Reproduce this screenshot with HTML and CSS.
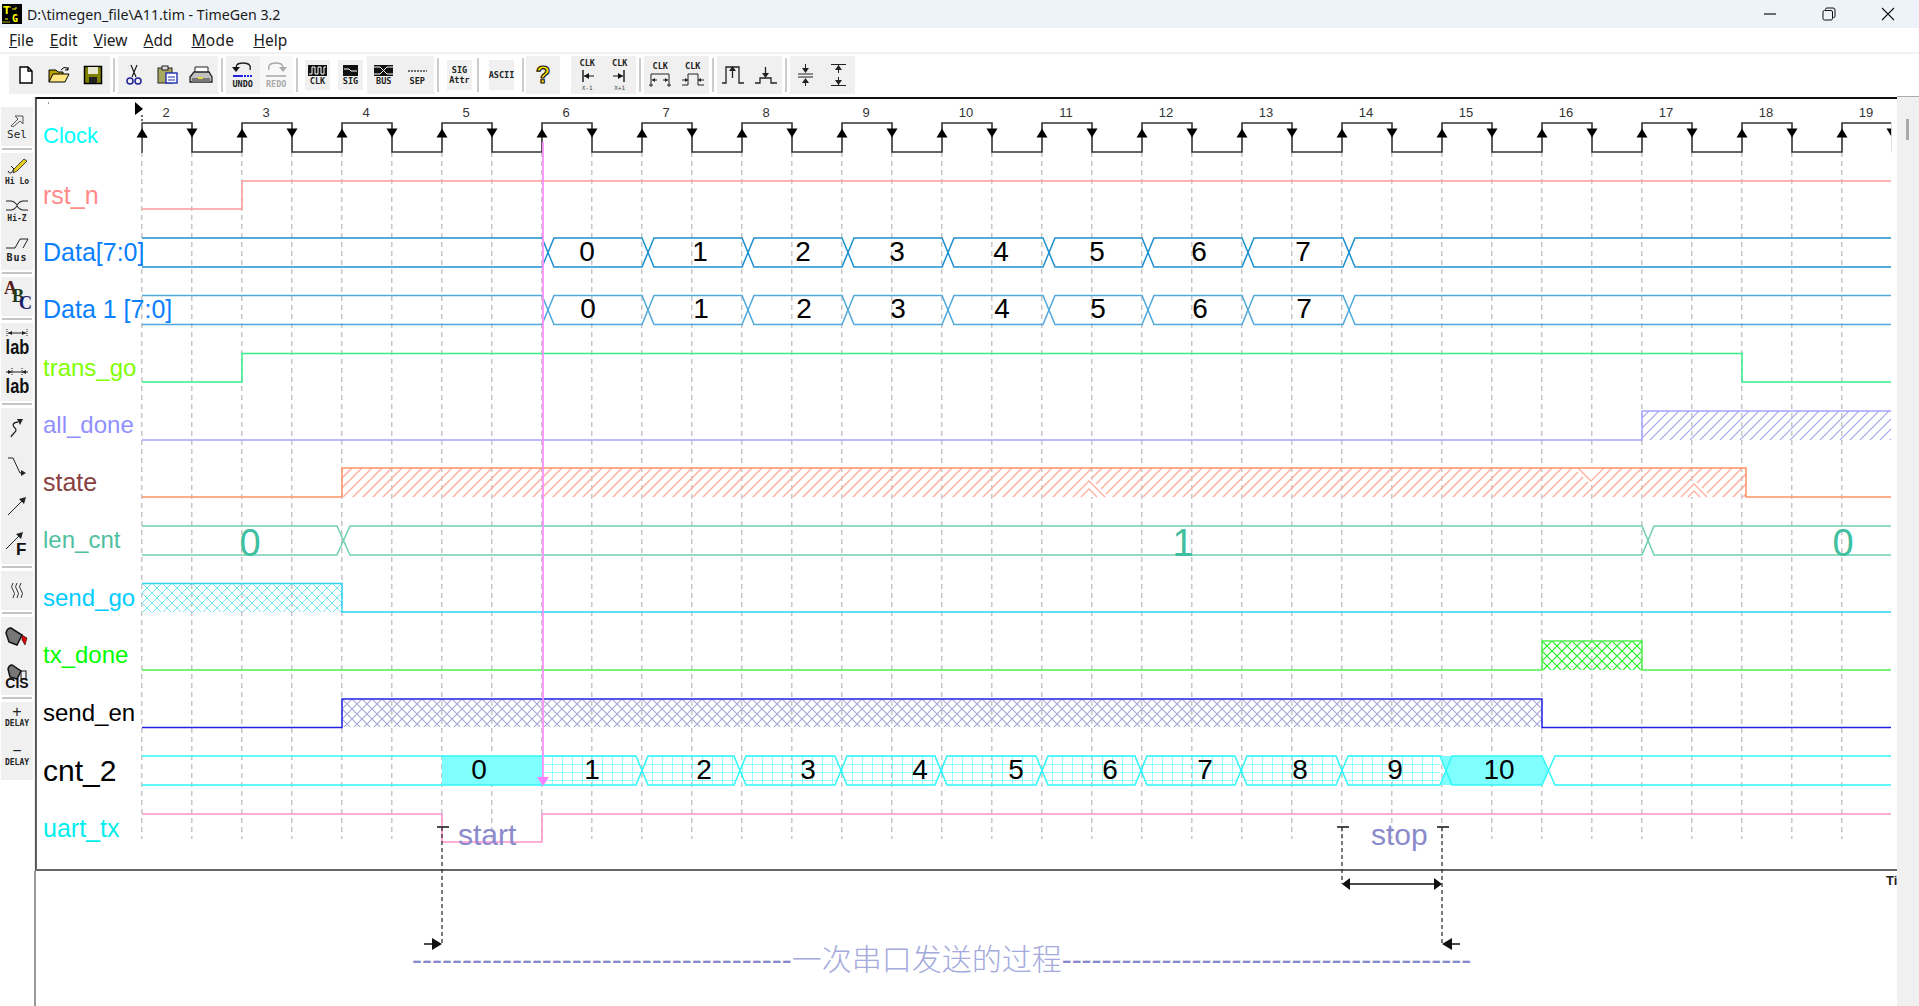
FILE: index.html
```html
<!DOCTYPE html>
<html lang="en">
<head>
  <meta charset="UTF-8" />
  <title>D:\timegen_file\A11.tim - TimeGen 3.2</title>
  <link rel="stylesheet" href="styles.css">
</head>
<body>
  <div class="titlebar">
    <svg class="app-icon" width="20" height="20" viewBox="0 0 20 20">
      <rect width="20" height="20" fill="#000"/>
      <path d="M1 3H9M5 3V10M10 5H14V3M3 15H6" stroke="#ff0" stroke-width="1" fill="none"/>
      <text x="1.5" y="10" class="app-t">T</text>
      <text x="10" y="17.5" class="app-t">G</text>
      <path d="M0 18H8" stroke="#aa0" fill="none"/>
    </svg>
    <span class="title-text">D:\timegen_file\A11.tim - TimeGen 3.2</span>
    <div class="win-btns">
      <button class="win-btn"><svg width="14" height="14" viewBox="0 0 14 14"><path d="M1 7H13" stroke="#111" stroke-width="1.2"/></svg></button>
      <button class="win-btn"><svg width="14" height="14" viewBox="0 0 14 14"><path d="M3.5 3V2.5Q3.5 1 5 1H11Q13 1 13 3V9Q13 10.5 11.5 10.5H11" fill="none" stroke="#111"/><rect x="1" y="3.5" width="9.5" height="9.5" rx="1.5" fill="none" stroke="#111"/></svg></button>
      <button class="win-btn"><svg width="14" height="14" viewBox="0 0 14 14"><path d="M1 1L13 13M13 1L1 13" stroke="#111" stroke-width="1.1"/></svg></button>
    </div>
  </div>

  <div class="menubar">
    <span><u>F</u>ile</span>
    <span><u>E</u>dit</span>
    <span><u>V</u>iew</span>
    <span><u>A</u>dd</span>
    <span class="menu-mode"><u>M</u>ode</span>
    <span><u>H</u>elp</span>
  </div>

  <div class="toolbar">
    <div class="tb-group">
      <button class="tb-btn"><svg width="18" height="20" viewBox="0 0 18 20"><path d="M3 2H11L15 6V18H3Z M11 2V6H15" fill="#fff" stroke="#000" stroke-width="1.4"/></svg></button>
      <button class="tb-btn"><svg width="22" height="20" viewBox="0 0 22 20"><path d="M1 17V5H8L10 7H15V9" fill="#b8a000" stroke="#000"/><path d="M1 17L5 9H21L17 17Z" fill="#ffe680" stroke="#000"/><path d="M13 5Q16 1 19 3L20 5M20 2V5H17" fill="none" stroke="#000"/></svg></button>
      <button class="tb-btn"><svg width="20" height="20" viewBox="0 0 20 20"><rect x="1.5" y="1.5" width="17" height="17" fill="#808000" stroke="#000" stroke-width="1.5"/><rect x="5" y="2" width="10" height="7" fill="#e8e8d0"/><rect x="6" y="12" width="8" height="6" fill="#222"/></svg></button>
    </div>
    <i class="tb-sep"></i>
    <div class="tb-group">
      <button class="tb-btn"><svg width="18" height="22" viewBox="0 0 18 22"><path d="M6 1L11 13M12 1L7 13" stroke="#111" stroke-width="1.1"/><circle cx="5" cy="17" r="3" fill="none" stroke="#22229a" stroke-width="1.5"/><circle cx="13" cy="17" r="3" fill="none" stroke="#22229a" stroke-width="1.5"/></svg></button>
      <button class="tb-btn"><svg width="22" height="20" viewBox="0 0 22 20"><rect x="1" y="3" width="14" height="15" fill="#a8a860" stroke="#222"/><rect x="5" y="1" width="6" height="4" fill="#ddd" stroke="#222"/><rect x="9" y="8" width="11" height="10" fill="#fff" stroke="#2030b0" stroke-width="1.4"/><path d="M11 12H18M11 15H18" stroke="#2030b0"/></svg></button>
      <button class="tb-btn"><svg width="24" height="20" viewBox="0 0 24 20"><path d="M6 8V2H19V8" fill="#fff" stroke="#222"/><path d="M1 12L5 7H20L23 12V17H1Z" fill="#c0c0c0" stroke="#222" stroke-width="1.3"/><rect x="3" y="13" width="18" height="4" fill="#777"/><rect x="9" y="12" width="5" height="2" fill="#e8d840"/></svg></button>
    </div>
    <i class="tb-sep"></i>
    <div class="tb-group tb-undo">
      <button class="tb-btn tb-stack">
        <svg width="24" height="17" viewBox="0 0 24 17"><path d="M6 8Q3 1 12 1Q21 1 19 8" fill="none" stroke="#222" stroke-width="1.3"/><path d="M1 5L9 5L5 10Z" fill="#111"/><path d="M2 14H12" stroke="#2222dd" stroke-width="2"/><path d="M13 14H22" stroke="#2222dd" stroke-width="2" stroke-dasharray="2 1"/></svg>
        <span class="tb-cap">UNDO</span>
      </button>
      <button class="tb-btn tb-stack tb-off">
        <svg width="24" height="17" viewBox="0 0 24 17"><path d="M5 8Q3 1 12 1Q21 1 18 8" fill="none" stroke="#aaa" stroke-width="1.3"/><path d="M23 5L15 5L19 10Z" fill="#aaa"/><path d="M2 14H22" stroke="#bbb" stroke-width="2"/></svg>
        <span class="tb-cap">REDO</span>
      </button>
    </div>
    <i class="tb-sep"></i>
    <button class="tb-btn tb-stack tb-mini">
      <svg width="19" height="11" viewBox="0 0 19 11"><rect width="19" height="11" fill="#111"/><path d="M1 9H4V2H7V9H10V2H13V9H16V2H18" fill="none" stroke="#fff"/></svg>
      <span class="tb-cap">CLK</span>
    </button>
    <button class="tb-btn tb-stack tb-mini">
      <svg width="15" height="11" viewBox="0 0 15 11"><rect width="15" height="11" fill="#111"/><path d="M1 4H6L8 6H14" fill="none" stroke="#fff"/></svg>
      <span class="tb-cap">SIG</span>
    </button>
    <div class="tb-group">
      <button class="tb-btn tb-stack">
        <svg width="19" height="11" viewBox="0 0 19 11"><rect width="19" height="11" fill="#111"/><path d="M0 2H6L13 9H19M0 9H6L13 2H19" fill="none" stroke="#fff"/></svg>
        <span class="tb-cap">BUS</span>
      </button>
      <button class="tb-btn tb-stack">
        <svg width="19" height="11" viewBox="0 0 19 11"><path d="M0 6H19" stroke="#444" stroke-dasharray="2 1" stroke-width="1.5"/></svg>
        <span class="tb-cap">SEP</span>
      </button>
    </div>
    <i class="tb-sep"></i>
    <button class="tb-btn tb-stack tb-mini tb-words"><span class="tb-cap">SIG</span><span class="tb-cap">Attr</span></button>
    <i class="tb-sep"></i>
    <button class="tb-btn tb-stack tb-mini tb-ascii"><span class="tb-cap">ASCII</span></button>
    <i class="tb-sep tb-sep-help"></i>
    <div class="tb-group">
      <button class="tb-btn"><svg width="20" height="30" viewBox="0 0 20 30"><text x="10" y="23" class="help-mark">?</text></svg></button>
    </div>
    <div class="tb-group tb-gap">
      <button class="tb-btn tb-narrow tb-stack">
        <span class="tb-cap">CLK</span>
        <svg width="18" height="14" viewBox="0 0 18 14"><path d="M5 1V13" stroke="#111" stroke-width="1.4"/><path d="M6 7H16" stroke="#111"/><path d="M6 7L11 4V10Z" fill="#111"/></svg>
        <span class="tb-tiny">X-1</span>
      </button>
      <button class="tb-btn tb-narrow tb-stack">
        <span class="tb-cap">CLK</span>
        <svg width="18" height="14" viewBox="0 0 18 14"><path d="M13 1V13" stroke="#111" stroke-width="1.4"/><path d="M2 7H12" stroke="#111"/><path d="M12 7L7 4V10Z" fill="#111"/></svg>
        <span class="tb-tiny">X+1</span>
      </button>
    </div>
    <i class="tb-sep"></i>
    <div class="tb-group">
      <button class="tb-btn tb-narrow tb-stack">
        <span class="tb-cap">CLK</span>
        <svg width="24" height="16" viewBox="0 0 24 16"><path d="M3 15V2H21V15" fill="none" stroke="#222"/><path d="M1 13H5M19 13H23" stroke="#222"/><path d="M4 8H9M20 8H15" stroke="#222"/><path d="M4 8L7 6V10ZM20 8L17 6V10Z" fill="#222"/></svg>
      </button>
      <button class="tb-btn tb-narrow tb-stack">
        <span class="tb-cap">CLK</span>
        <svg width="24" height="16" viewBox="0 0 24 16"><path d="M1 13H7V2H17V13H23" fill="none" stroke="#222"/><path d="M1 8H7M23 8H17" stroke="#222"/><path d="M7 8L4 6V10ZM17 8L20 6V10Z" fill="#222"/></svg>
      </button>
    </div>
    <i class="tb-sep"></i>
    <div class="tb-group">
      <button class="tb-btn tb-narrow"><svg width="24" height="22" viewBox="0 0 24 22"><path d="M1 19H5V3H18V19H23" fill="none" stroke="#222" stroke-width="1.3"/><path d="M11.5 5V14" stroke="#222" stroke-width="1.3"/><path d="M11.5 2L8 7H15Z" fill="#222"/></svg></button>
      <button class="tb-btn tb-narrow"><svg width="24" height="22" viewBox="0 0 24 22"><path d="M1 19H6V14H17V19H23" fill="none" stroke="#222" stroke-width="1.3"/><path d="M11.5 3V12" stroke="#222" stroke-width="1.3"/><path d="M11.5 14L8 9H15Z" fill="#222"/></svg></button>
    </div>
    <i class="tb-sep"></i>
    <div class="tb-group">
      <button class="tb-btn tb-narrow"><svg width="20" height="24" viewBox="0 0 20 24"><path d="M2 11H17M2 14H17" stroke="#222" stroke-width="1.1"/><path d="M9.5 1V9M9.5 16V23" stroke="#222"/><path d="M9.5 10L6 5H13ZM9.5 15L6 20H13Z" fill="#222"/></svg></button>
      <button class="tb-btn tb-narrow"><svg width="20" height="24" viewBox="0 0 20 24"><path d="M2 1.5H17M2 22.5H17" stroke="#222" stroke-width="1.2"/><path d="M9.5 2V10M9.5 14V22" stroke="#222"/><path d="M9.5 2L6 7H13ZM9.5 22L6 17H13Z" fill="#222"/></svg></button>
    </div>
  </div>

  <div class="workspace">
    <div class="sidebar">
      <div class="side-group">
        <button class="side-btn">
          <svg width="16" height="14" viewBox="0 0 16 14"><path d="M2 13L9 6L6 3H14V11L11 8L4 14Z" fill="#eee" stroke="#555"/></svg>
          <span class="side-cap">Sel</span>
        </button>
      </div>
      <i class="side-sep"></i>
      <div class="side-group">
        <button class="side-btn">
          <svg width="21" height="17" viewBox="0 0 21 17"><path d="M1 13Q3 18 7 11L4 8" fill="none" stroke="#111"/><path d="M7 11L17 1L20 3L10 13L6 15Z" fill="#e8d020" stroke="#222" stroke-width=".8"/></svg>
          <span class="side-cap side-bold">Hi Lo</span>
        </button>
        <button class="side-btn">
          <svg width="24" height="13" viewBox="0 0 24 13"><path d="M1 2H6Q9 2 12 6Q15 2 18 2H23M1 11H6Q9 11 12 7Q15 11 18 11H23" fill="none" stroke="#222" stroke-width="1.2"/></svg>
          <span class="side-cap side-bold">Hi-Z</span>
        </button>
        <button class="side-btn">
          <svg width="24" height="12" viewBox="0 0 24 12"><path d="M1 10H10L15 1H23L18 10" fill="none" stroke="#222"/></svg>
          <span class="side-cap side-tab">Bus</span>
        </button>
      </div>
      <i class="side-sep"></i>
      <div class="side-group">
        <button class="side-btn">
          <svg width="30" height="36" viewBox="0 0 30 36"><text x="2" y="15" class="abc"><tspan class="abc-a">A</tspan><tspan class="abc-b" dx="-5" dy="8">B</tspan><tspan class="abc-c" dx="-5" dy="7">C</tspan></text></svg>
        </button>
      </div>
      <i class="side-sep"></i>
      <div class="side-group">
        <button class="side-btn">
          <svg width="24" height="8" viewBox="0 0 24 8"><path d="M2 0V8M22 0V8" stroke="#222" stroke-dasharray="1 1"/><path d="M3 4H21" stroke="#222"/><path d="M3 4L7 2V6ZM21 4L17 2V6Z" fill="#222"/></svg>
          <span class="side-lab">lab</span>
        </button>
        <button class="side-btn">
          <svg width="24" height="8" viewBox="0 0 24 8"><path d="M7 0V8M17 0V8" stroke="#222" stroke-dasharray="1 1"/><path d="M1 4H23" stroke="#222"/><path d="M7 4L3 2V6ZM17 4L21 2V6Z" fill="#222"/></svg>
          <span class="side-lab">lab</span>
        </button>
      </div>
      <i class="side-sep"></i>
      <div class="side-group">
        <button class="side-btn"><svg width="22" height="22" viewBox="0 0 22 22"><path d="M12 5Q5 6 8 10Q12 13 8 16Q6 18 5 20" fill="none" stroke="#222" stroke-width="1.3"/><path d="M17 2L11 2L14 8Z" fill="#222"/></svg></button>
        <button class="side-btn"><svg width="22" height="22" viewBox="0 0 22 22"><path d="M2 2H7L14 17H18" fill="none" stroke="#222"/><path d="M20 17L15 14V20Z" fill="#222"/></svg></button>
        <button class="side-btn"><svg width="22" height="22" viewBox="0 0 22 22"><path d="M2 20L19 3" stroke="#222"/><path d="M20 2L13 4L18 9Z" fill="#222"/></svg></button>
        <button class="side-btn"><svg width="26" height="34" viewBox="0 0 26 34"><path d="M2 21L18 5" stroke="#222"/><path d="M19 4L12 6L17 11Z" fill="#222"/><text x="12" y="27" class="side-f">F</text></svg></button>
      </div>
      <i class="side-sep"></i>
      <div class="side-group">
        <button class="side-btn"><svg width="14" height="18" viewBox="0 0 14 18"><path d="M3 1Q0 5 3 8T3 16M7 1Q4 5 7 8T7 16M11 1Q8 5 11 8T11 16" fill="none" stroke="#333"/></svg></button>
      </div>
      <i class="side-sep"></i>
      <div class="side-group">
        <button class="side-btn"><svg width="24" height="20" viewBox="0 0 24 20"><path d="M1 6Q2 1 6 1L17 8L12 18L4 15Z" fill="#777" stroke="#111" stroke-width="1.5"/><path d="M17 8L22 11L20 18L17 13Z" fill="#e00000" stroke="#111" stroke-width=".6"/></svg></button>
        <button class="side-btn side-cis">
          <svg width="22" height="16" viewBox="0 0 22 16"><path d="M2 5Q3 1 6 1L15 7L11 15L4 13Z" fill="#777" stroke="#111" stroke-width="1.5"/><rect x="15" y="7" width="5" height="8" fill="none" stroke="#111"/></svg>
          <span class="side-lab side-lab-s">CIS</span>
        </button>
      </div>
      <i class="side-sep"></i>
      <div class="side-group">
        <button class="side-btn side-top"><span class="delay-sign">+</span><span class="side-cap side-delay">DELAY</span></button>
        <button class="side-btn side-top"><span class="delay-sign">&#8722;</span><span class="side-cap side-delay">DELAY</span></button>
      </div>
    </div>

    <svg class="sheet" width="1863" height="910" viewBox="34 96 1863 910">
      <defs>
        <pattern id="gridline" patternUnits="userSpaceOnUse" x="117" y="152" width="50" height="9">
          <rect x="24" y="0" width="1.5" height="5" fill="#c6c6c6"/>
        </pattern>
        <pattern id="clock-tile" patternUnits="userSpaceOnUse" x="117" y="120" width="100" height="36">
          <path d="M0 32H25V3H75V32H100" fill="none" stroke="#333" stroke-width="1.6"/>
          <path d="M25 8.5L19.5 17.5H30.5Z M69.5 8.5H80.5L75 17.5Z" fill="#000"/>
        </pattern>
        <pattern id="slash-red" patternUnits="userSpaceOnUse" width="10" height="10">
          <path d="M-1 11L11 -1M-1 1L1 -1M9 11L11 9" stroke="#ffb0a0" stroke-width="1.5"/>
        </pattern>
        <pattern id="slash-blue" patternUnits="userSpaceOnUse" width="10" height="10">
          <path d="M-1 11L11 -1M-1 1L1 -1M9 11L11 9" stroke="#a4a4ec" stroke-width="1.2"/>
        </pattern>
        <pattern id="cross-cyan" patternUnits="userSpaceOnUse" x="142" y="583" width="10" height="10">
          <path d="M0 0L10 10M0 10L10 0" stroke="#6fe6f2" stroke-width="1"/>
        </pattern>
        <pattern id="cross-green" patternUnits="userSpaceOnUse" x="1542" y="641" width="10" height="10">
          <path d="M0 0L10 10M0 10L10 0" stroke="#22ee22" stroke-width="1.2"/>
        </pattern>
        <pattern id="cross-navy" patternUnits="userSpaceOnUse" x="342" y="699" width="10" height="10">
          <path d="M0 0L10 10M0 10L10 0" stroke="#a8a8d8" stroke-width="1.2"/>
        </pattern>
        <pattern id="grid-cyan" patternUnits="userSpaceOnUse" x="542" y="756" width="10" height="8">
          <path d="M0 0H10M0 0V8" stroke="#70ffff" stroke-width="1.5"/>
        </pattern>
        <g id="data-bus">
          <path d="M142 238H542L554 267H642L654 238H742L754 267H842L854 238H942L954 267H1043L1055 238H1142L1154 267H1242L1254 238H1343L1355 267H1891"/>
          <path d="M142 267H542L554 238H642L654 267H742L754 238H842L854 267H942L954 238H1043L1055 267H1142L1154 238H1242L1254 267H1343L1355 238H1891"/>
        </g>
      </defs>

      <rect x="140" y="152" width="1704" height="687" fill="url(#gridline)"/>

      <path d="M35.9 97V871" class="edge-dark"/>
      <path d="M35 871V1006" class="edge-soft"/>
      <path d="M36 98H1897" class="edge-top"/>
      <path d="M35 870H1897" class="edge-bottom"/>

      <rect x="48" y="102.5" width="1" height="1" fill="#333"/>
      <path d="M135 102L143 109L135 115Z" fill="#000"/>
      <path d="M142 115V123" stroke="#333" stroke-dasharray="2 2" stroke-width="1.4"/>
      <rect x="141.2" y="120" width="1750" height="36" fill="url(#clock-tile)"/>
      <path d="M142 128.5L136.5 137.5H147.5Z" fill="#000"/>

      <g class="clock-nums">
        <text x="166" y="117">2</text><text x="266" y="117">3</text><text x="366" y="117">4</text><text x="466" y="117">5</text><text x="566" y="117">6</text><text x="666" y="117">7</text><text x="766" y="117">8</text><text x="866" y="117">9</text><text x="966" y="117">10</text><text x="1066" y="117">11</text><text x="1166" y="117">12</text><text x="1266" y="117">13</text><text x="1366" y="117">14</text><text x="1466" y="117">15</text><text x="1566" y="117">16</text><text x="1666" y="117">17</text><text x="1766" y="117">18</text><text x="1866" y="117">19</text>
      </g>

      <g class="sig-names">
        <text x="43" y="143" class="n-clock">Clock</text>
        <text x="43" y="204" class="n-rst">rst_n</text>
        <text x="43" y="261" class="n-data">Data[7:0]</text>
        <text x="43" y="318" class="n-data">Data 1 [7:0]</text>
        <text x="43" y="376" class="n-trans">trans_go</text>
        <text x="43" y="433" class="n-all">all_done</text>
        <text x="43" y="491" class="n-state">state</text>
        <text x="43" y="548" class="n-len">len_cnt</text>
        <text x="43" y="606" class="n-go">send_go</text>
        <text x="43" y="663" class="n-tx">tx_done</text>
        <text x="43" y="721" class="n-en">send_en</text>
        <text x="43" y="781" class="n-cnt">cnt_2</text>
        <text x="43" y="837" class="n-uart">uart_tx</text>
      </g>

      <!-- hatched spans -->
      <rect x="1642" y="411" width="249" height="29" fill="url(#slash-blue)"/>
      <rect x="343" y="468" width="1403" height="29" fill="url(#slash-red)"/>
      <path d="M1069 497L1089 477L1109 497Z" fill="#fff"/>
      <path d="M1073 497L1089 481L1105 497M1081 497L1089 489L1097 497" class="chev"/>
      <path d="M1574 468L1591 485L1608 468Z" fill="#fff"/>
      <path d="M1578 468L1591 481L1604 468" class="chev"/>
      <path d="M1677 497L1694 480L1711 497Z" fill="#fff"/>
      <path d="M1681 497L1694 484L1707 497M1688 497L1694 491L1700 497" class="chev"/>
      <rect x="142" y="584" width="200" height="28" fill="url(#cross-cyan)"/>
      <rect x="1542" y="641" width="100" height="29" fill="url(#cross-green)"/>
      <rect x="342" y="699" width="1200" height="28" fill="url(#cross-navy)"/>
      <rect x="442" y="756" width="100" height="29" fill="#80ffff"/>
      <path d="M542 756H636L642 770L648 756H734L740 770L746 756H835L841 770L847 756H935L941 770L947 756H1036L1042 770L1048 756H1135L1141 770L1147 756H1235L1241 770L1247 756H1336L1342 770L1348 756H1440V785H1348L1342 771L1336 785H1247L1241 771L1235 785H1147L1141 771L1135 785H1048L1042 771L1036 785H947L941 771L935 785H847L841 771L835 785H746L740 771L734 785H648L642 771L636 785H542Z" fill="url(#grid-cyan)"/>
      <path d="M1440 756H1542L1548 770L1542 785H1440L1446 770Z" fill="#80ffff"/>

      <!-- traces -->
      <g class="traces">
        <path d="M142 209H242V181H1891" class="t-rst"/>
        <use href="#data-bus" class="t-data"/>
        <use href="#data-bus" y="57.5" class="t-data1"/>
        <path d="M142 382H242V353.5H1742V382H1891" class="t-trans"/>
        <path d="M142 440H1642V411H1891" class="t-all"/>
        <path d="M142 497H342V468H1746V497H1891" class="t-state"/>
        <path d="M142 526H337L350 555H1642L1654 526H1891M142 555H337L350 526H1642L1654 555H1891" class="t-len"/>
        <path d="M142 583.5H342V612H1891" class="t-go"/>
        <path d="M142 670H1542V641H1642V670H1891" class="t-tx"/>
        <path d="M142 727.5H342V699H1542V727.5H1891" class="t-en"/>
        <path d="M142 756H636L648 785H734L746 756H835L847 785H935L947 756H1036L1048 785H1135L1147 756H1235L1247 785H1336L1348 756H1440L1452 785H1542L1555 756H1891" class="t-cnt"/>
        <path d="M142 785H636L648 756H734L746 785H835L847 756H935L947 785H1036L1048 756H1135L1147 785H1235L1247 756H1336L1348 785H1440L1452 756H1542L1555 785H1891" class="t-cnt"/>
        <path d="M142 814H442V842H542V814H1891" class="t-uart"/>
      </g>

      <g class="bus-vals">
        <text x="587" y="261">0</text><text x="700" y="261">1</text><text x="803" y="261">2</text><text x="897" y="261">3</text><text x="1001" y="261">4</text><text x="1097" y="261">5</text><text x="1199" y="261">6</text><text x="1303" y="261">7</text>
        <text x="588" y="318">0</text><text x="701" y="318">1</text><text x="804" y="318">2</text><text x="898" y="318">3</text><text x="1002" y="318">4</text><text x="1098" y="318">5</text><text x="1200" y="318">6</text><text x="1304" y="318">7</text>
        <text x="479" y="779">0</text><text x="592" y="779">1</text><text x="704" y="779">2</text><text x="808" y="779">3</text><text x="920" y="779">4</text><text x="1016" y="779">5</text><text x="1110" y="779">6</text><text x="1205" y="779">7</text><text x="1300" y="779">8</text><text x="1395" y="779">9</text><text x="1499" y="779">10</text>
      </g>
      <g class="len-vals">
        <text x="250" y="556">0</text><text x="1183" y="556">1</text><text x="1843" y="556">0</text>
      </g>

      <path d="M543 142V780" class="cursor"/>
      <path d="M537 777H549L543 786Z" fill="#ff80ff"/>

      <!-- timing marks -->
      <g class="marks">
        <path d="M437 827H449M1337 827H1349M1437 827H1449"/>
        <path d="M442 827V944M1342 827V884M1442 827V944" class="mark-dash"/>
        <path d="M424 944H434M1348 884H1436M1452 944H1460"/>
      </g>
      <path d="M442 944L432 938V950ZM1342 884L1350 878V890ZM1442 884L1434 878V890ZM1442 944L1452 938V950Z" fill="#111"/>
      <text x="458" y="845" class="note">start</text>
      <text x="1371" y="845" class="note">stop</text>
      <text x="1886" y="885" class="corner-ti">Ti</text>
      <text x="412" y="970" class="caption">--------------------------------------<tspan class="caption-cjk">一次串口发送的过程</tspan>-----------------------------------------</text>
    </svg>

    <div class="scrollbar"><div class="scroll-thumb"></div></div>
  </div>
</body>
</html>
```

FILE: styles.css
```css
html, body {
  margin: 0;
  height: 100%;
  overflow: hidden;
  background: #fff;
  font-family: "Noto Sans", "Liberation Sans", sans-serif;
}

button {
  border: none;
  padding: 0;
  background: none;
  font: inherit;
}

/* title bar */
.titlebar {
  height: 28px;
  background: #eef3f9;
  display: flex;
  align-items: center;
  padding-left: 2px;
}

.app-icon {
  margin-right: 5px;
}

.app-t {
  font: bold 10px "DejaVu Sans Mono", monospace;
  fill: #ff0;
}

.title-text {
  font-size: 14.2px;
  color: #1a1a1a;
}

.win-btns {
  margin-left: auto;
  margin-right: 2px;
  display: flex;
}

.win-btn {
  width: 59px;
  height: 28px;
  display: flex;
  align-items: center;
  justify-content: center;
}

/* menu */
.menubar {
  height: 24px;
  border-bottom: 2px solid #f2f2f2;
  padding-left: 9px;
  display: flex;
  align-items: center;
  gap: 16px;
  font-size: 15.5px;
  color: #1a1a1a;
}

.menu-mode {
  margin: 0 3px;
  letter-spacing: .3px;
}

/* top toolbar */
.toolbar {
  height: 42px;
  padding-left: 9px;
  display: flex;
  align-items: center;
}

.tb-group {
  display: flex;
  height: 38px;
  background: #f0f0f0;
}

.tb-undo {
  background: linear-gradient(90deg, #f0f0f0 50%, #f8f8f8 50%);
}

.tb-gap {
  margin-left: 11.5px;
}

.tb-btn {
  width: 33.5px;
  height: 38px;
  display: flex;
  align-items: center;
  justify-content: center;
}

.tb-narrow {
  width: 32.5px;
}

.tb-stack {
  flex-direction: column;
  gap: 1px;
}

.tb-mini {
  width: 25px;
  height: 30px;
  margin: 0 4px;
  background: #f0f0f0;
}

.tb-words {
  margin: 0 2px 0 5px;
}

.tb-ascii {
  margin: 0 5px 0 7px;
}

.tb-cap {
  font: bold 8.5px/9px "DejaVu Sans Mono", monospace;
  color: #222;
}

.tb-off .tb-cap {
  color: #aaa;
}

.tb-tiny {
  font: 6px/7px "DejaVu Sans Mono", monospace;
  color: #444;
}

.tb-sep {
  width: 2px;
  height: 34px;
  background: #ccc;
  margin: 0 3px;
}

.tb-sep-help {
  margin-right: 2px;
}

.help-mark {
  font: bold 24px "Liberation Sans", sans-serif;
  text-anchor: middle;
  fill: #ffe600;
  stroke: #111;
  stroke-width: 1.1;
}

/* left tools + sheet */
.workspace {
  display: flex;
  height: 910px;
}

.sidebar {
  width: 34px;
  flex: none;
  padding-top: 11px;
  box-sizing: border-box;
}

.side-group {
  margin: 0 1px;
  background: #f0f0f0;
}

.side-btn {
  width: 100%;
  height: 39px;
  display: flex;
  flex-direction: column;
  align-items: center;
  justify-content: center;
  gap: 2px;
  overflow: hidden;
}

.side-top {
  justify-content: flex-start;
  padding-top: 4px;
  gap: 1px;
}

.side-sep {
  display: block;
  height: 2px;
  margin: 2px 2px 3px;
  background: #c4c4c4;
}

.side-cap {
  font: 11px/12px "DejaVu Sans Mono", monospace;
  color: #222;
}

.side-bold {
  font-size: 8px;
  line-height: 10px;
  font-weight: bold;
}

.side-tab {
  font-weight: bold;
  font-size: 10px;
  letter-spacing: 1px;
}

.side-lab {
  font: bold 20px/17px "Liberation Sans", sans-serif;
  color: #111;
  transform: scaleX(.82);
}

.side-lab-s {
  font-size: 14px;
  line-height: 10px;
  margin-top: -4px;
  transform: none;
}

.side-delay {
  font-size: 8px;
  line-height: 9px;
  font-weight: bold;
}

.delay-sign {
  font: 16px/12px "Liberation Sans", sans-serif;
  color: #222;
}

.side-f {
  font: bold 17px "Liberation Sans", sans-serif;
  fill: #111;
}

.abc {
  font: bold 18px "Liberation Serif", serif;
}

.abc-a { fill: #5a1a1a; }
.abc-b { fill: #1a3a1a; }
.abc-c { fill: #1a1a6a; }

.sheet {
  flex: none;
  display: block;
}

.scrollbar {
  flex: 1;
  background: #f0f0f0;
  border-top: 1px solid #aaa;
  padding-top: 22px;
}

.scroll-thumb {
  width: 3px;
  height: 21px;
  margin-left: 9px;
  background: #a8a8a8;
}

/* sheet edges */
.edge-dark { stroke: #555; stroke-width: 2; }
.edge-soft { stroke: #999; stroke-width: 2; }
.edge-top { stroke: #111; stroke-width: 2; }
.edge-bottom { stroke: #666; stroke-width: 2; }

/* waveform text */
.clock-nums text {
  font: 13px "Liberation Sans", sans-serif;
  fill: #333;
  text-anchor: middle;
}

.sig-names text {
  font: 24px "Liberation Sans", sans-serif;
}

.sig-names .n-clock { fill: #00ffff; font-size: 22px; }
.sig-names .n-rst { fill: #ff8a8a; font-size: 25px; }
.sig-names .n-data { fill: #0a80ff; font-size: 25px; }
.n-trans { fill: #80ff00; }
.n-all { fill: #8f8fff; }
.sig-names .n-state { fill: #8a4040; font-size: 25px; }
.n-len { fill: #4fbf9f; }
.n-go { fill: #00ccff; }
.n-tx { fill: #00ff00; }
.n-en { fill: #000; }
.sig-names .n-cnt { fill: #000; font-size: 30px; }
.sig-names .n-uart { fill: #00eeee; font-size: 25px; }

.bus-vals text {
  font: 28px "Liberation Sans", sans-serif;
  fill: #000;
  text-anchor: middle;
}

.len-vals text {
  font: 38px "Liberation Sans", sans-serif;
  fill: #40c0a0;
  text-anchor: middle;
}

/* traces */
.traces {
  fill: none;
  stroke-width: 1.5;
}

.t-rst { stroke: #ff9c9c; }
.t-data { stroke: #1c90d0; }
.t-data1 { stroke: #50a8dc; }
.t-trans { stroke: #36f088; }
.t-all { stroke: #a4a4ff; }
.t-state { stroke: #ff9264; }
.t-len { stroke: #70d0b4; }
.t-go { stroke: #30d4f4; }
.t-tx { stroke: #50f050; }
.t-en { stroke: #2222e6; }
.t-cnt { stroke: #30f8f8; }
.t-uart { stroke: #ff94cc; }

.chev {
  fill: none;
  stroke: #ffb0a0;
  stroke-width: 1.4;
}

.cursor {
  stroke: #ff90ff;
  stroke-width: 1.8;
}

.marks {
  fill: none;
  stroke: #111;
  stroke-width: 1.3;
}

.mark-dash {
  stroke-dasharray: 4 3;
  stroke: #333;
}

.note {
  font: 30px "Liberation Sans", sans-serif;
  fill: #8a8acc;
}

.corner-ti {
  font: bold 13px "Liberation Sans", sans-serif;
  fill: #222;
}

.caption {
  font: 30px "Liberation Sans", "Noto Sans CJK SC", sans-serif;
  fill: #8888cc;
}

.caption-cjk {
  font-family: "Noto Sans CJK SC", sans-serif;
  font-weight: 300;
  fill: #a4aadc;
}
```
